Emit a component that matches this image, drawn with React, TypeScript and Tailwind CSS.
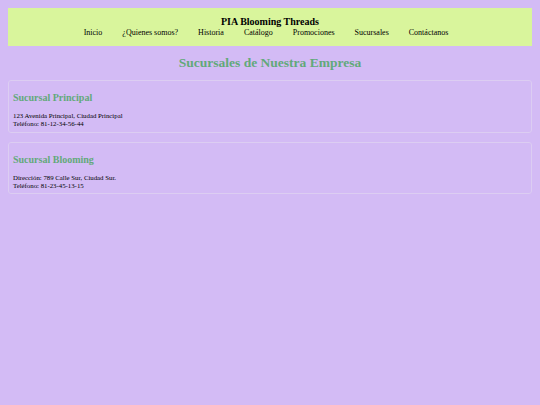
const navItems = ['Inicio', '¿Quienes somos?', 'Historia', 'Catálogo', 'Promociones', 'Sucursales', 'Contáctanos'];

const branches = [
  { name: 'Sucursal Principal', lines: ['123 Avenida Principal, Ciudad Principal', 'Teléfono: 81-12-34-56-44'] },
  { name: 'Sucursal Blooming', lines: ['Dirección: 789 Calle Sur, Ciudad Sur.', 'Teléfono: 81-23-45-13-15'] },
];

export default function App() {
  return (
    <div className="min-h-[405px] bg-[#d3bbf5] p-2 font-['Liberation_Serif',serif] text-black">
      {/* header */}
      <header className="flex flex-col items-center bg-[#d9f59c] pt-[8px] pb-[9px]">
        <h1 className="text-[10px] font-bold leading-[12px]">PIA Blooming Threads</h1>
        <nav className="flex justify-center pr-[8px] text-[8px] leading-[9px]">
          {navItems.map((item) => (
            <a key={item} href="#" className="px-[10px]">
              {item}
            </a>
          ))}
        </nav>
      </header>

      <h2 className="mt-[9px] text-center text-[13.5px] font-bold leading-[16px] text-[#62a97a]">
        Sucursales de Nuestra Empresa
      </h2>

      <div className="mt-[9px] flex flex-col gap-[9px]">
        {branches.map((b) => (
          <section key={b.name} className="rounded-[3px] border border-[#dccdf2] px-[4px] pt-[11px] pb-[3.5px]">
            <h3 className="text-[10px] font-bold leading-[12px] text-[#62a97a]">{b.name}</h3>
            <div className="mt-[8px] text-[6.8px] leading-[8px]">
              {b.lines.map((l) => (
                <p key={l}>{l}</p>
              ))}
            </div>
          </section>
        ))}
      </div>
    </div>
  );
}
